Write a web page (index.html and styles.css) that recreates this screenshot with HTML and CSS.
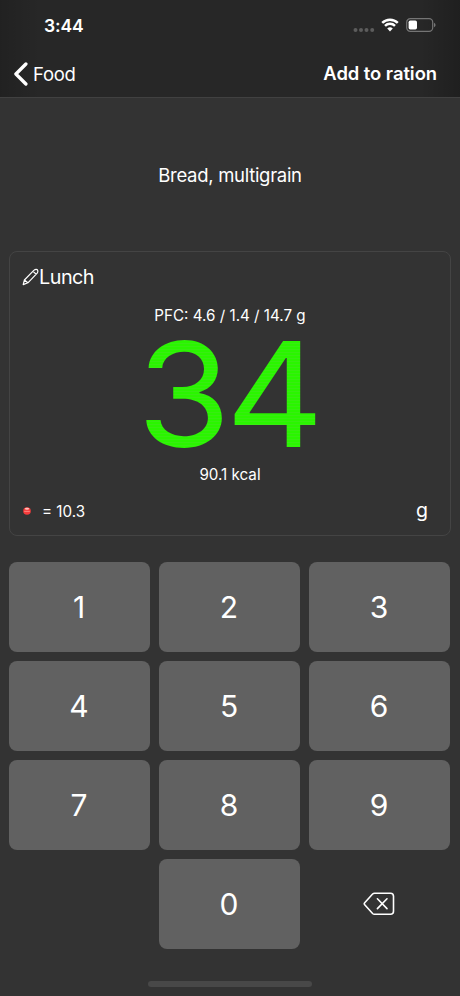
FILE: index.html
```html
<!DOCTYPE html>
<html lang="en">
<head>
<meta charset="utf-8">
<title>Food</title>
<link rel="stylesheet" href="styles.css">
</head>
<body>
<header class="top">
  <div class="status">
    <span class="clock">3:44</span>
    <div class="indicators">
      <svg class="signal" width="22" height="6" viewBox="0 0 22 6"><circle cx="2.5" cy="3" r="2"/><circle cx="8" cy="3" r="2"/><circle cx="13.5" cy="3" r="2"/><circle cx="19.2" cy="3" r="2"/></svg>
      <svg class="wifi" width="18" height="14" viewBox="0 0 18 14"><path d="M1.2 4.8A11.2 11.2 0 0 1 16.8 4.8M4 7.9A7.1 7.1 0 0 1 14 7.9"/><path class="wifi-dot" d="M6.2 10.4Q9 8 11.8 10.4L9 13.4Z"/></svg>
      <svg class="battery" width="30" height="14" viewBox="0 0 30 14"><rect class="battery-case" x=".7" y=".7" width="26" height="12.6" rx="3.6"/><rect class="battery-level" x="2.6" y="2.6" width="8.4" height="8.8" rx="1.7"/><path class="battery-tip" d="M28 4.7Q29.6 5.4 29.6 7Q29.6 8.6 28 9.3Z"/></svg>
    </div>
  </div>
  <nav class="nav">
    <a class="back"><svg width="15" height="24" viewBox="0 0 15 24"><path d="M12.9 2L2.9 12L12.9 22"/></svg><span>Food</span></a>
    <a class="add">Add to ration</a>
  </nav>
</header>
<main>
  <h1 class="title">Bread, multigrain</h1>
  <section class="card">
    <div class="meal"><svg width="17" height="18" viewBox="0 0 17 18"><path d="M1.2 16.6L2.4 12L11.8 2.4Q13.6 .9 15.2 1.6Q16.5 3.2 15.2 5.2L5.9 14.8ZM2.4 12L5.9 14.8M11 3.4L14.2 6.2"/></svg><span>Lunch</span></div>
    <div class="pfc">PFC: 4.6 / 1.4 / 14.7 g</div>
    <div class="amount">34</div>
    <div class="kcal">90.1 kcal</div>
    <div class="bottom">
      <div class="units"><svg width="8" height="8" viewBox="0 0 8 8"><circle cx="4" cy="4" r="3.8" fill="#f63b3b"/><ellipse cx="4" cy="1.8" rx="2.2" ry="1" fill="#ffc0ba"/><path d="M1.2 3.9H6.8V4.8H1.2Z" fill="#ff8a84"/></svg><span>= 10.3</span></div>
      <span class="gram">g</span>
    </div>
  </section>
  <div class="keypad">
    <button class="key">1</button><button class="key">2</button><button class="key">3</button>
    <button class="key">4</button><button class="key">5</button><button class="key">6</button>
    <button class="key">7</button><button class="key">8</button><button class="key">9</button>
    <button class="key zero">0</button>
    <button class="erase" aria-label="Delete"><svg width="32" height="24" viewBox="0 0 32 24"><path d="M11.5 1.2H27.5Q30.5 1.2 30.5 4.2V19.3Q30.5 22.3 27.5 22.3H11.5Q10.4 22.3 9.6 21.5L1.7 12.8Q.8 11.8 1.7 10.8L9.6 2Q10.4 1.2 11.5 1.2Z"/><path d="M14.4 6.8L24 16.6M24 6.8L14.4 16.6"/></svg></button>
  </div>
</main>
<footer class="home"></footer>
</body>
</html>
```
FILE: styles.css
```css
* { box-sizing: border-box; }
body {
  margin: 0;
  width: 460px;
  height: 996px;
  overflow: hidden;
  display: flex;
  flex-direction: column;
  background: #333;
  color: #fff;
  font-family: Inter, "Liberation Sans", sans-serif;
}
svg { display: block; fill: none; flex: none; }
.top {
  height: 98px;
  background: linear-gradient(90deg, rgba(0,0,0,.15), transparent 40px, transparent 420px, rgba(0,0,0,.2)), #272727;
  border-bottom: 1px solid #414141;
}
.status {
  height: 50px;
  padding: 0 24px 0 44px;
  display: flex;
  align-items: center;
  justify-content: space-between;
}
.clock { font-size: 17.5px; font-weight: 600; letter-spacing: -.1px; }
.indicators { display: flex; align-items: center; }
.signal { fill: #5c5c5c; margin: 9px 6px 0 0; }
.wifi { stroke: #fff; stroke-width: 2.5; margin-right: 7px; }
.wifi-dot { fill: #fff; stroke: none; }
.battery-case { stroke: #757575; stroke-width: 1.2; }
.battery-level { fill: #fff; }
.battery-tip { fill: #757575; }
.nav {
  height: 47px;
  padding: 0 23px 0 13px;
  display: flex;
  align-items: center;
  justify-content: space-between;
}
.back { display: flex; align-items: center; gap: 5px; font-size: 18.5px; letter-spacing: -.3px; }
.back svg { stroke: #fff; stroke-width: 3.3; stroke-linecap: round; stroke-linejoin: round; }
.add { font-size: 18.4px; font-weight: 600; letter-spacing: -.05px; margin-top: -1px; }
.title {
  margin: 0;
  height: 153px;
  line-height: 154px;
  text-align: center;
  font-size: 18.5px;
  font-weight: 400;
  letter-spacing: -.3px;
}
.card {
  margin: 0 9px;
  height: 285px;
  padding: 13px 22px 10px 12px;
  border: 1px solid #444;
  border-radius: 8px;
}
.meal { height: 24px; display: flex; align-items: center; font-size: 19.8px; letter-spacing: -.5px; }
.meal svg { stroke: #fff; stroke-width: 1.2; stroke-linejoin: round; }
.pfc, .amount, .kcal { margin-right: -10px; text-align: center; }
.pfc { margin-top: 15px; height: 22px; line-height: 23px; font-size: 15.2px; }
.amount {
  height: 137px;
  line-height: 137px;
  font-size: 145.5px;
  letter-spacing: -5px;
  text-indent: -4px;
  transform: scaleX(1.045);
  color: transparent;
  background: repeating-linear-gradient(#2af500 0 2px, #38ec12 2px 3px);
  background-clip: text;
  -webkit-background-clip: text;
}
.kcal { height: 22px; line-height: 23px; font-size: 15.2px; }
.bottom { margin-top: 12px; height: 28px; display: flex; align-items: center; justify-content: space-between; }
.units { display: flex; align-items: center; gap: 11px; padding-left: 1px; font-size: 15.2px; }
.gram { font-size: 19.5px; margin-top: -3px; }
.keypad {
  margin: 26px 10px 0 9px;
  display: grid;
  grid-template-columns: repeat(3, 141px);
  grid-auto-rows: 90px;
  gap: 9px;
}
.key, .erase { border: 0; padding: 0; border-radius: 8px; color: #fff; font: 400 30px Inter, "Liberation Sans", sans-serif; }
.key { background: #616161; padding: 0 1px 0 0; }
.zero { grid-column: 2; }
.erase { background: none; display: grid; place-items: center; padding-right: 1px; }
.erase svg { stroke: #fff; stroke-width: 1.6; stroke-linecap: round; }
.home { width: 164px; height: 6px; border-radius: 3px; background: #484848; margin: 32px auto 0 148px; }
```
